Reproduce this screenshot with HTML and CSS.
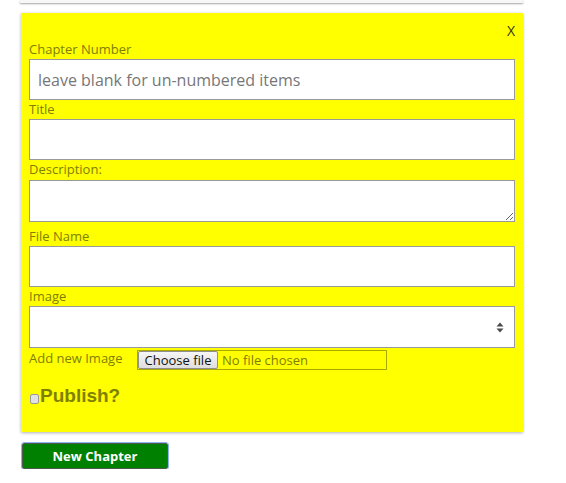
FILE: index.html
```html
<!DOCTYPE html>
<html>
<head>
<meta charset="utf-8">
<link rel="stylesheet" href="styles.css">
</head>
<body>
<div class="page">
  <div class="prev-card"></div>
  <div class="card">
    <div class="close">X</div>
    <label class="lbl">Chapter Number</label>
    <input class="field" type="text" placeholder="leave blank for un-numbered items">
    <label class="lbl">Title</label>
    <input class="field" type="text">
    <label class="lbl lbl-desc">Description:</label>
    <div class="ta-wrap">
      <textarea class="field area"></textarea>
    </div>
    <label class="lbl">File Name</label>
    <input class="field" type="text">
    <label class="lbl">Image</label>
    <div class="field select">
      <svg class="arrows" width="8" height="11" viewBox="0 0 8 11"><path d="M4 0.5 L7.5 4.5 L0.5 4.5 Z M4 10.5 L7.5 6.5 L0.5 6.5 Z" fill="#4a4a4a"/></svg>
    </div>
    <div class="file-row">
      <span class="lbl-inline">Add new Image</span>
      <div class="file">
        <span class="file-btn">Choose file</span>
        <span class="file-name">No file chosen</span>
      </div>
    </div>
    <div class="publish">
      <span class="check"></span>
      <span class="publish-text">Publish?</span>
    </div>
  </div>
  <div class="actions">
    <button class="btn-new">New Chapter</button>
  </div>
</div>
</body>
</html>
```
FILE: styles.css
```css
html, body {
  margin: 0;
  padding: 0;
  background: #ffffff;
}
body {
  font-family: "Open Sans", "Liberation Sans", sans-serif;
}
.page {
  width: 502px;
  padding-left: 21px;
}
.prev-card {
  height: 3px;
  margin-left: -1px;
  width: 503px;
  background: #f7f7f7;
  box-shadow: 0 1px 2px rgba(0,0,0,0.35);
}
.card {
  margin-top: 10px;
  background: #ffff00;
  box-shadow: 0 1px 3px rgba(0,0,0,0.3);
  padding: 8px 8px 0 8px;
  height: 419px;
  box-sizing: border-box;
}
.close {
  text-align: right;
  font-size: 14px;
  line-height: 20px;
  height: 19px;
  color: #333300;
  padding-right: 0;
}
.lbl {
  display: block;
  font-size: 13px;
  line-height: 19px;
  height: 19px;
  color: #808000;
}
.lbl-desc {
  height: 20px;
}
.field {
  display: block;
  box-sizing: border-box;
  width: 486px;
  height: 41px;
  margin: 0;
  border: 1px solid #999999;
  background: #ffffff;
  font-family: "Open Sans", "Liberation Sans", sans-serif;
  font-size: 16px;
  padding: 0 8px;
  outline: none;
}
.field::placeholder {
  color: #777777;
}
.ta-wrap {
  height: 47px;
}
.area {
  height: 42px;
  resize: vertical;
}
.select {
  display: flex;
  align-items: center;
  justify-content: flex-end;
  padding-right: 10px;
  height: 42px;
}
.arrows {
  display: block;
}
.file-row {
  display: flex;
  align-items: flex-start;
  margin-top: 2px;
}
.lbl-inline {
  font-size: 13px;
  line-height: 16px;
  color: #808000;
  width: 108px;
}
.file {
  display: flex;
  align-items: stretch;
  box-sizing: border-box;
  width: 250px;
  height: 20px;
  border: 1px solid #a8a800;
  font-size: 13px;
}
.file-btn {
  box-sizing: border-box;
  width: 80px;
  display: flex;
  align-items: center;
  justify-content: center;
  background: linear-gradient(#f6f6f6, #dedede);
  border: 1px solid #8f8f8f;
  border-radius: 2px;
  color: #111111;
  line-height: 16px;
}
.file-name {
  padding-left: 4px;
  color: #808000;
  line-height: 18px;
}
.publish {
  display: flex;
  align-items: flex-end;
  margin-top: 13px;
  height: 24px;
}
.check {
  width: 7px;
  height: 8px;
  border: 1px solid #9a9a9a;
  border-radius: 2px;
  background: #e2e2e2;
  margin-left: 1px;
  margin-bottom: 3px;
  box-sizing: content-box;
}
.publish-text {
  font-family: "Liberation Sans", Arial, sans-serif;
  font-weight: bold;
  font-size: 19px;
  line-height: 22px;
  color: #808000;
  margin-left: 1px;
}
.actions {
  padding-top: 11px;
}
.btn-new {
  display: block;
  width: 146px;
  height: 26px;
  margin-left: 1px;
  box-sizing: border-box;
  background: #008000;
  color: #ffffff;
  border: 1px solid #4d5b4d;
  border-radius: 2px;
  outline: 1px solid #8fb3f2;
  outline-offset: 0;
  font-family: "Open Sans", "Liberation Sans", sans-serif;
  font-weight: bold;
  font-size: 13px;
  line-height: 22px;
  padding: 0;
}
```
